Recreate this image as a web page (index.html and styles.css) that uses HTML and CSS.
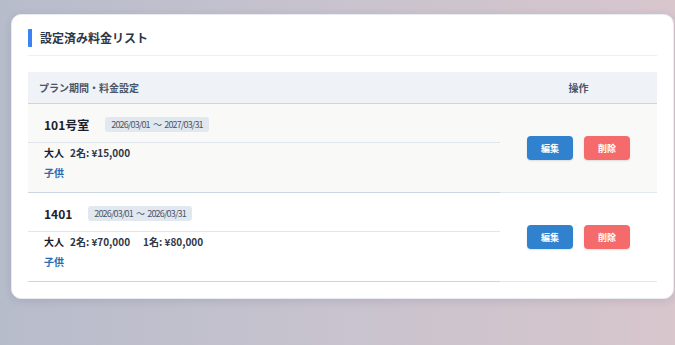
FILE: index.html
```html
<!DOCTYPE html>
<html lang="ja">
<head>
<meta charset="utf-8">
<title>設定済み料金リスト</title>
<link rel="stylesheet" href="styles.css">
</head>
<body>
<div class="card">
  <h2 class="card-title">設定済み料金リスト</h2>
  <div class="table">
    <div class="thead">
      <div class="th th-plan">プラン期間・料金設定</div>
      <div class="th th-ops">操作</div>
    </div>
    <div class="row row-alt">
      <div class="cell-plan">
        <div class="plan-head">
          <span class="room">101号室</span>
          <span class="period">2026/03/01 〜 2027/03/31</span>
        </div>
        <div class="prices">
          <div class="price-line"><span class="label">大人</span><span class="item">2名: ¥15,000</span></div>
          <div class="price-line"><span class="label child">子供</span></div>
        </div>
      </div>
      <div class="cell-ops">
        <button class="btn btn-edit">編集</button>
        <button class="btn btn-del">削除</button>
      </div>
    </div>
    <div class="row">
      <div class="cell-plan">
        <div class="plan-head">
          <span class="room">1401</span>
          <span class="period">2026/03/01 〜 2026/03/31</span>
        </div>
        <div class="prices">
          <div class="price-line"><span class="label">大人</span><span class="item">2名: ¥70,000</span><span class="item">1名: ¥80,000</span></div>
          <div class="price-line"><span class="label child">子供</span></div>
        </div>
      </div>
      <div class="cell-ops">
        <button class="btn btn-edit">編集</button>
        <button class="btn btn-del">削除</button>
      </div>
    </div>
  </div>
</div>
</body>
</html>
```
FILE: styles.css
```css
html, body {
  margin: 0;
  padding: 0;
  height: 100%;
}
body {
  background: linear-gradient(90deg, #b7bccb 0%, #c8c3ce 50%, #d8c6cc 100%);
  font-family: "Noto Sans CJK JP", "Noto Sans", sans-serif;
  color: #2d3748;
  padding: 14px 1px 0 11px;
  box-sizing: border-box;
}
.card {
  background: #fff;
  border: 1px solid #e8ebf0;
  border-radius: 10px;
  box-shadow: 0 2px 8px rgba(40, 40, 70, 0.12);
  padding: 14px 16px 16px 16px;
}
.card-title {
  margin: 0;
  font-size: 12px;
  line-height: 18px;
  font-weight: 700;
  color: #2d3748;
  border-left: 4px solid #3b82f6;
  border-radius: 1px;
  padding-left: 8px;
  margin-bottom: 8px;
}
.table {
  border-top: 1px solid #edf0f4;
  padding-top: 16px;
}
.thead {
  display: grid;
  grid-template-columns: 472px 1fr;
  background: #eff2f7;
  border-bottom: 1px solid #cdd5e0;
  height: 31px;
  align-items: center;
}
.th {
  font-size: 10px;
  font-weight: 700;
  color: #4a5568;
}
.th-plan {
  padding-left: 11px;
}
.th-ops {
  text-align: center;
}
.row {
  display: grid;
  grid-template-columns: 472px 1fr;
  background: #fff;
}
.row-alt {
  background: #f9f9f8;
}
.cell-plan {
  border-bottom: 1px solid #cbd6e3;
}
.cell-ops {
  border-bottom: 1px solid #e2e8f0;
  display: flex;
  justify-content: center;
  align-items: center;
  gap: 11px;
}
.plan-head {
  display: flex;
  align-items: center;
  padding: 12px 16px 9px 16px;
  border-bottom: 1px solid #dfe6ee;
}
.room {
  font-size: 12px;
  line-height: 17px;
  font-weight: 700;
  color: #1a202c;
  margin-right: 16px;
}
.period {
  font-family: "Noto Sans CJK JP", sans-serif;
  font-size: 9px;
  letter-spacing: -0.85px;
  word-spacing: 2px;
  line-height: 15px;
  height: 15px;
  background: #e2e8f0;
  color: #4a5568;
  border-radius: 3px;
  padding: 0 6px;
}
.prices {
  padding: 0 16px 9px 16px;
}
.price-line {
  display: flex;
  padding: 2px 0;
  line-height: 16px;
  font-size: 10px;
  font-weight: 700;
  color: #2d3748;
}
.label {
  margin-right: 6px;
  color: #1a202c;
}
.label.child {
  color: #2b6cb0;
}
.item {
  margin-right: 13px;
}
.btn {
  border: none;
  font-family: "Noto Sans CJK JP", sans-serif;
  font-size: 9px;
  font-weight: 700;
  color: #fff;
  width: 46px;
  height: 24px;
  border-radius: 4px;
  padding: 0;
  box-shadow: 0 1px 2px rgba(0, 0, 0, 0.12);
}
.btn-edit {
  background: #3182ce;
}
.btn-del {
  background: #f56b6b;
}
```
